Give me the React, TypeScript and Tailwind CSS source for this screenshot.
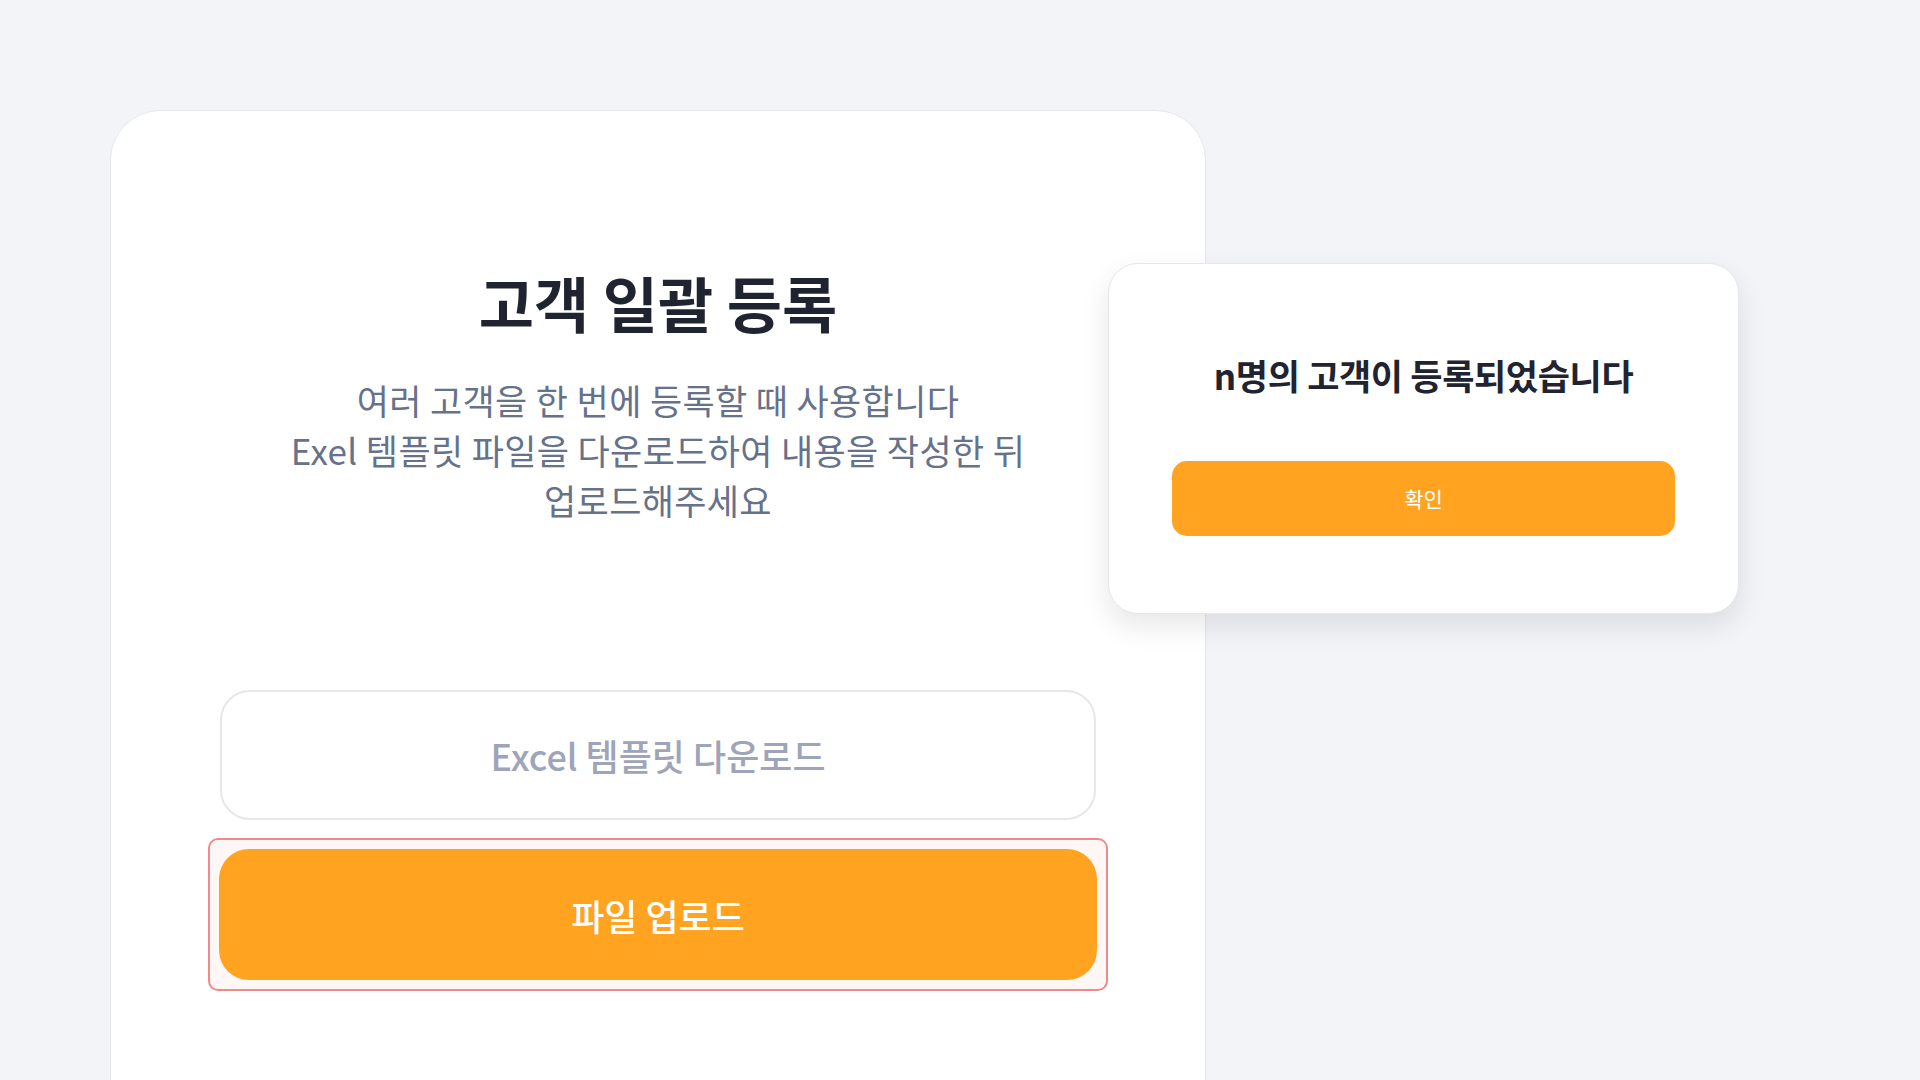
import React from "react";

const font = { fontFamily: '"Noto Sans CJK KR", "Noto Sans", sans-serif' };

function SuccessModal() {
  return (
    <div className="absolute left-[1108px] top-[263px] w-[631px] h-[351px] bg-white rounded-[30px] border border-gray-200 shadow-[0_12px_28px_rgba(15,23,42,0.10)] flex flex-col items-center px-[63px] pt-[89px]">
      <h2 className="text-[35px] leading-[44px] font-bold text-[#1f2430] tracking-[-0.01em]">
        n명의 고객이 등록되었습니다
      </h2>
      <button className="mt-[64px] w-full h-[75px] rounded-[15px] bg-[#ffa320] text-white text-[21px]">
        확인
      </button>
    </div>
  );
}

export default function App() {
  return (
    <div className="relative h-screen w-full overflow-hidden bg-[#f3f4f7]" style={font}>
      <div className="ml-[110px] mt-[110px] w-[1096px] h-[1100px] bg-white rounded-[50px] border border-gray-200 flex flex-col items-center pt-[155px]">
        <h1 className="text-[60px] leading-[72px] font-bold text-[#1f2430]">
          고객 일괄 등록
        </h1>
        <p className="mt-[37px] text-[35px] leading-[50px] text-[#66718a] text-center tracking-[0.01em]">
          여러 고객을 한 번에 등록할 때 사용합니다
          <br />
          Exel 템플릿 파일을 다운로드하여 내용을 작성한 뒤
          <br />
          업로드해주세요
        </p>

        <div className="mt-[165px] w-[876px] flex flex-col">
          <button className="h-[130px] w-full rounded-[30px] border-2 border-gray-200 bg-white text-[36px] font-medium text-[#9ea5b8]">
            Excel 템플릿 다운로드
          </button>
          <div className="mt-[18px] -mx-[12px] p-[9px] rounded-[10px] border-2 border-[#f08a8a] bg-[#fff6f6]">
            <button className="h-[131px] w-full rounded-[30px] bg-[#ffa320] text-white text-[36px] font-medium">
              파일 업로드
            </button>
          </div>
        </div>
      </div>
      <SuccessModal />
    </div>
  );
}
